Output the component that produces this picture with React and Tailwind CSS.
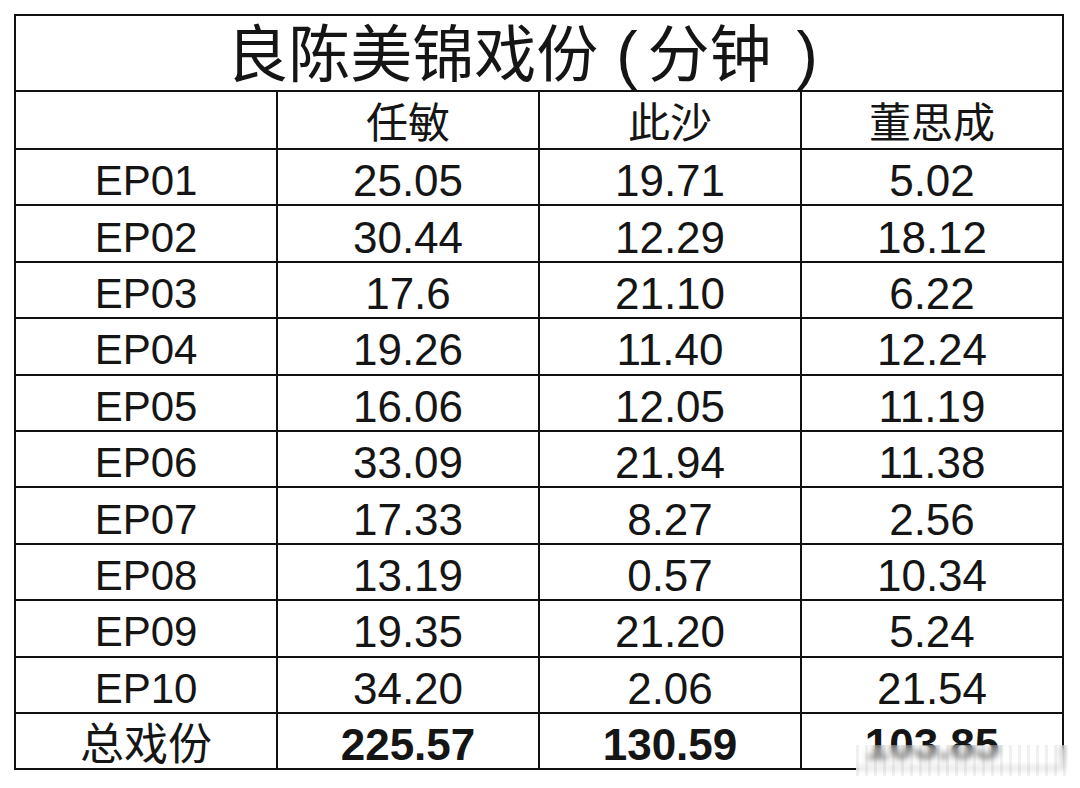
import React from 'react';

const ROWS = [
  ['EP01', '25.05', '19.71', '5.02'],
  ['EP02', '30.44', '12.29', '18.12'],
  ['EP03', '17.6', '21.10', '6.22'],
  ['EP04', '19.26', '11.40', '12.24'],
  ['EP05', '16.06', '12.05', '11.19'],
  ['EP06', '33.09', '21.94', '11.38'],
  ['EP07', '17.33', '8.27', '2.56'],
  ['EP08', '13.19', '0.57', '10.34'],
  ['EP09', '19.35', '21.20', '5.24'],
  ['EP10', '34.20', '2.06', '21.54'],
];

const TOTAL = ['总戏份', '225.57', '130.59', '103.85'];

const cell = 'border-2 border-[#111] text-center align-middle p-0 pt-2';

export default function App() {
  return (
    <div className="relative w-[1080px] h-[788px] bg-white text-[#151515] font-['Liberation_Sans','Noto_Sans_CJK_SC',sans-serif]">
      <div className="pl-[14px] pt-[14px]">
        <table className="w-[1050px] table-fixed border-collapse">
          <tbody>
            <tr className="h-[76px]">
              <td colSpan={4} className="border-2 border-[#111] text-center align-middle p-0 pt-1 pr-[24px] text-[62px] leading-none whitespace-nowrap">
                良陈美锦戏份
                <span className="inline-block pl-[18px] pr-[10px] text-[64px]">(</span>
                分钟
                <span className="inline-block pl-[25px] pr-[10px] text-[64px]">)</span>
              </td>
            </tr>
            <tr className="h-[58px]">
              <td className={cell}></td>
              <td className={`${cell} text-[42px] leading-none`}>任敏</td>
              <td className={`${cell} text-[42px] leading-none`}>此沙</td>
              <td className={`${cell} text-[42px] leading-none`}>董思成</td>
            </tr>
            {ROWS.map((r) => (
              <tr key={r[0]} className="h-[56.4px]">
                {r.map((v, i) => (
                  <td key={i} className={`${cell} leading-none ${i === 0 ? 'text-[42px]' : 'text-[44px]'}`}>
                    {v}
                  </td>
                ))}
              </tr>
            ))}
            <tr className="h-[56.4px]">
              <td className={`${cell} text-[44px] leading-none`}>{TOTAL[0]}</td>
              <td className={`${cell} text-[44px] leading-none font-bold`}>{TOTAL[1]}</td>
              <td className={`${cell} text-[44px] leading-none font-bold`}>{TOTAL[2]}</td>
              <td className={`${cell} text-[44px] leading-none font-bold`}>{TOTAL[3]}</td>
            </tr>
          </tbody>
        </table>
      </div>

      {/* blurred watermark over the last cell */}
      <div className="absolute left-[856px] top-[745px] w-[212px] h-[31px] backdrop-blur-[3px] bg-gradient-to-b from-white/20 via-white/55 to-white/90">
        <div className="h-full w-full bg-[repeating-linear-gradient(90deg,rgba(120,120,120,0.18)_0px,rgba(120,120,120,0.18)_3px,transparent_3px,transparent_9px)] opacity-60" />
      </div>
    </div>
  );
}
